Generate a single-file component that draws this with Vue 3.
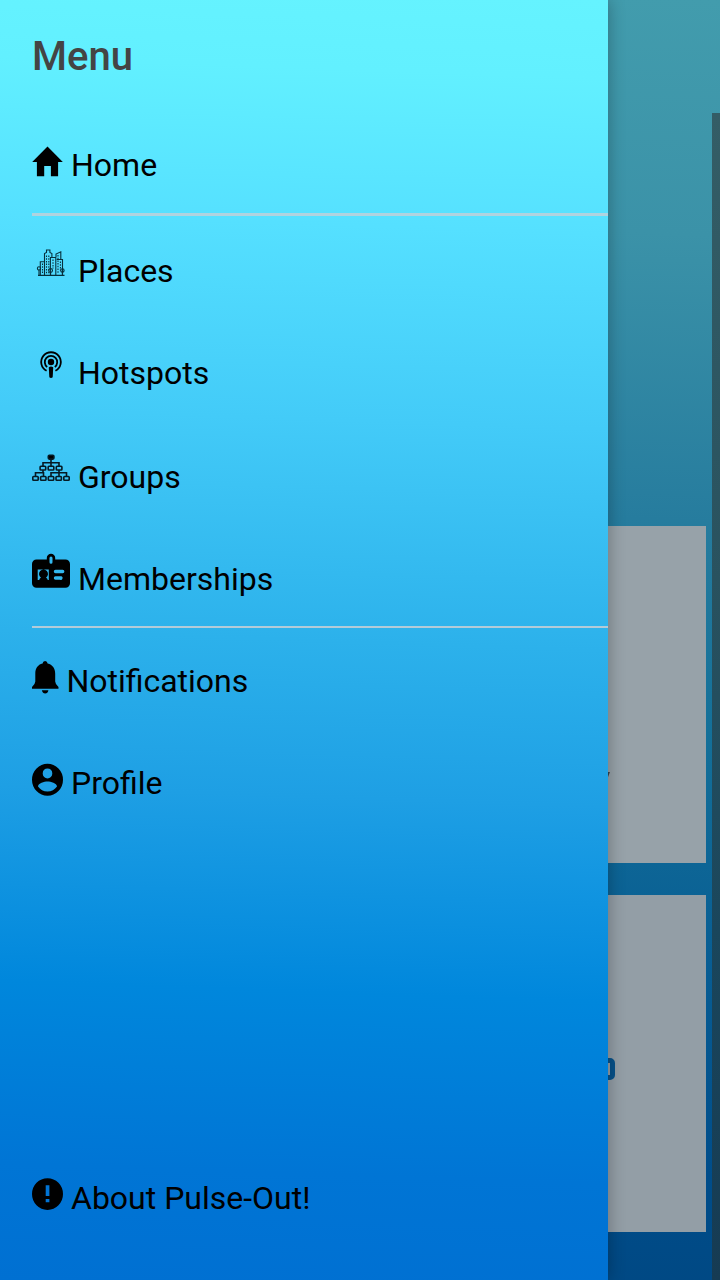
<script setup>
import { ref } from 'vue'

const title = 'Menu'

// width is the horizontal room the icon takes in front of its label
const items = ref([
  { id: 'home', label: 'Home', width: 31, divider: 'thick' },
  { id: 'places', label: 'Places', width: 38 },
  { id: 'hotspots', label: 'Hotspots', width: 38 },
  { id: 'groups', label: 'Groups', width: 38 },
  { id: 'memberships', label: 'Memberships', width: 38, divider: 'thin' },
  { id: 'notifications', label: 'Notifications', width: 26.4 },
  { id: 'profile', label: 'Profile', width: 31 },
  { id: 'about', label: 'About Pulse-Out!', width: 31 },
])
</script>

<template>
  <div class="app">
    <main class="page">
      <section class="card">
        <span class="tail"></span>
      </section>
      <section class="card">
        <span class="badge"></span>
      </section>
    </main>
    <div class="side-strip"></div>

    <nav class="drawer">
      <h1>{{ title }}</h1>
      <template v-for="item in items" :key="item.id">
        <a class="item" :class="item.id">
          <svg :width="item.width" height="52" :viewBox="`0 0 ${item.width} 52`">
            <path v-if="item.id === 'home'" d="M12.2 37.3V27h6.7v10.3h7.2V22.9h4.7L15.5 7.6.2 22.9h4.7v14.4z" />

            <g v-else-if="item.id === 'places'" class="line">
              <path d="M6 30.4h26.5M8.3 30V16.7h4.4M12.5 30V8.5l2-1V5h3.4v2.5l2 1V13M18.4 30V12.5h5.4V30M24 12V9l4.8-2.2v7.5M24.8 14.5h5.7V30" />
              <path class="dash" d="M10.5 18.5v10M14.5 10.5v18M16.8 10.5v18M21 14.5v9M26 10v18M28.4 16.5v9" />
              <circle cx="7" cy="23.4" r="1.6" />
              <circle cx="18.6" cy="25.5" r="1.9" />
              <circle cx="30.4" cy="25.5" r="1.7" />
              <path d="M7 25v5M18.6 27v3M30.4 27v3" />
            </g>

            <g v-else-if="item.id === 'hotspots'">
              <path class="arc" d="M14.6 23.8A9.8 9.8 0 1 1 23.4 23.8" />
              <path class="arc" d="M15.2 20A6.2 6.2 0 1 1 22.8 20" />
              <circle cx="19" cy="15" r="3.2" />
              <path d="M16.8 20.2q2.2-1.4 4.4 0l-.5 10.1q-1.7 1.4-3.4 0z" />
            </g>

            <g v-else-if="item.id === 'groups'" class="tree">
              <rect x="16.3" y="4.3" width="5.6" height="3.8" rx="1" fill="#000" />
              <path d="M19 8v7M11 15v-3.2h16V15M3.5 25v-3.2h8V25M11 19v3M19 25v-3.2h15.5V25M27 19v6" />
              <rect x="8.1" y="15.2" width="5.6" height="3.8" rx=".8" />
              <rect x="16.2" y="15.2" width="5.6" height="3.8" rx=".8" />
              <rect x="24.3" y="15.2" width="5.6" height="3.8" rx=".8" />
              <rect x=".8" y="25.5" width="5.4" height="3.8" rx=".8" />
              <rect x="8.6" y="25.5" width="5.4" height="3.8" rx=".8" />
              <rect x="16.3" y="25.5" width="5.4" height="3.8" rx=".8" />
              <rect x="24" y="25.5" width="5.4" height="3.8" rx=".8" />
              <rect x="31.8" y="25.5" width="5.4" height="3.8" rx=".8" />
            </g>

            <path v-else-if="item.id === 'memberships'" fill-rule="evenodd" d="M4.5 6.5h10.3V5a4.2 4.2 0 0 1 8.4 0v1.5h10.3a4.5 4.5 0 0 1 4.5 4.5v19.2a4.5 4.5 0 0 1-4.5 4.5h-29A4.5 4.5 0 0 1 0 30.200V11a4.500 4.500 0 0 1 4.500-4.500zM17.500 5v4.200a1.500 1.500 0 0 0 3 0V5a1.500 1.500 0 0 0-3 0zM5.700 16.500V27h1.500q.3-1.700 1.800-2.300a4.500 4.500 0 1 1 5 0q1.500.6 1.800 2.300h1V16.500zM23.500 16.800a1.700 1.700 0 0 0 0 3.400h7.200a1.700 1.700 0 0 0 0-3.400zM23.500 23.300a1.700 1.700 0 0 0 0 3.400h4.500a1.700 1.700 0 0 0 1.500-3.400z" />

            <g v-else-if="item.id === 'notifications'">
              <path d="M13.100 6q2.300 0 2.500 2.600c5 1.200 7.600 5 7.600 10.100v7.700q.2 3 3.300 5.700v1.700H0v-1.700q3.100-2.700 3.300-5.700v-7.700c0-5.100 2.300-8.900 7.300-10.100Q10.800 6 13.100 6z" />
              <path d="M9.900 35.200h6.500q-.7 3.300-3.200 3.300t-3.300-3.300z" />
            </g>

            <path v-else-if="item.id === 'profile'" fill-rule="evenodd" d="M15.500 6.800a15.500 16 0 1 0 0 32 15.500 16 0 0 0 0-32zm0 4.600a4.800 5 0 1 1 0 10 4.800 5 0 0 1 0-10zm0 23.100c-4 0-7.300-2-9.500-5 .2-3 6.200-4.900 9.500-4.900s9.300 1.900 9.500 4.900c-2.200 3-5.500 5-9.500 5z" />

            <path v-else fill-rule="evenodd" d="M15.500 6.200a15.500 15.900 0 1 0 0 31.800 15.500 15.900 0 0 0 0-31.800zM13.700 13.300h3.700v10.800h-3.700zM13.700 27h3.700v3.300h-3.700z" />
          </svg>
          <span>{{ item.label }}</span>
        </a>
        <hr v-if="item.divider" :class="item.divider" />
      </template>
    </nav>
  </div>
</template>

<style>
body {
  margin: 0;
}
</style>

<style scoped>
.app {
  position: relative;
  display: flex;
  width: 720px;
  height: 1280px;
  overflow: hidden;
  font-family: Roboto, sans-serif;
  background: linear-gradient(182deg, #429cad 0%, #3b92a8 18%, #267c9e 40%, #147099 56%, #075c93 75%, #004d8a 90%, #004883 100%);
}

.page {
  box-sizing: border-box;
  display: flex;
  flex-direction: column;
  gap: 32px;
  width: 712px;
  padding: 526px 6px 48px 14px;
}

.card {
  display: flex;
  align-items: flex-start;
  justify-content: flex-end;
  height: 337px;
  background: #97a2a9;
}

.card + .card {
  background: #939ea6;
}

.tail {
  width: 6px;
  height: 5px;
  margin: 246px 97px 0 0;
  background: #39434b;
  transform: skewX(-20deg);
}

.badge {
  box-sizing: border-box;
  width: 22px;
  height: 22px;
  margin: 163px 91px 0 0;
  border: 5px solid #07528a;
  border-radius: 5px;
}

.side-strip {
  width: 8px;
  margin-top: 113px;
  background: linear-gradient(#345d66, #29525f 40%, #1a465c 70%, #163b53);
}

.drawer {
  position: absolute;
  top: 0;
  left: 0;
  box-sizing: border-box;
  display: flex;
  flex-direction: column;
  width: 608px;
  height: 1280px;
  padding: 0 0 31px 32px;
  background: linear-gradient(182deg, #65f3ff 0%, #62f0ff 6%, #55e0ff 18%, #43cbf8 33%, #2cb1eb 50%, #1e9fe4 62%, #0087dc 77%, #0075d5 91%, #0070d2 100%);
  box-shadow: 0 0 16px rgba(0, 0, 0, 0.3);
}

h1 {
  height: 114px;
  margin: 0;
  line-height: 113px;
  font-size: 40px;
  font-weight: 500;
  color: #444;
}

.item {
  display: flex;
  flex-shrink: 0;
  align-items: center;
  gap: 8px;
  height: 102px;
  font-size: 32px;
  color: #000;
}

.item svg {
  flex-shrink: 0;
  overflow: visible;
}

.home {
  height: 101px;
}

.groups {
  margin-top: 2px;
}

.about {
  margin-top: auto;
}

hr {
  flex-shrink: 0;
  width: 100%;
  border: 0;
  background: #b0d3df;
}

.thick {
  height: 3px;
  margin: -2px 0 4px;
}

.thin {
  height: 2px;
  margin: -4px 0 2px;
  background: #b3cbd8;
}

.line {
  fill: none;
  stroke: #06303c;
  stroke-width: 1.1;
}

.dash {
  stroke-dasharray: 1.5 1.2;
}

.arc {
  fill: none;
  stroke: #000;
  stroke-width: 1.8;
}

.tree {
  fill: none;
  stroke: #051a24;
  stroke-width: 1.6;
}
</style>
